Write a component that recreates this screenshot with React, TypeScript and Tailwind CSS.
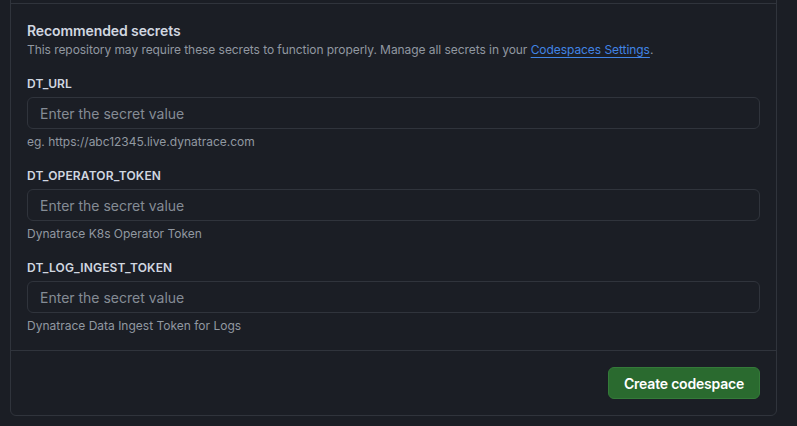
import React from "react";

const fields = [
  { name: "DT_URL", hint: "eg. https://abc12345.live.dynatrace.com" },
  { name: "DT_OPERATOR_TOKEN", hint: "Dynatrace K8s Operator Token" },
  { name: "DT_LOG_INGEST_TOKEN", hint: "Dynatrace Data Ingest Token for Logs" },
];

export default function App() {
  return (
    <div
      className="w-[797px] h-[426px] bg-[#1b1e25] overflow-hidden"
      style={{ fontFamily: "Inter, 'Noto Sans', sans-serif" }}
    >
      <div className="ml-[10px] w-[767px] -mt-[11px] border border-[#30343c] rounded-b-[6px]">
        <div className="h-[13px]" />
        <div className="border-t border-[#30343c] px-4 pt-[17px] pb-[15px]">
          <h2 className="text-[14px] leading-[20px] font-semibold text-[#d1d7e0] tracking-[-0.1px]">
            Recommended secrets
          </h2>
          <p className="text-[12px] leading-[18px] text-[#9198a1] tracking-[-0.06px]">
            This repository may require these secrets to function properly. Manage all secrets in your{" "}
            <a className="text-[#4184e4] underline underline-offset-[3px] decoration-1">Codespaces Settings</a>.
          </p>
          <div className="mt-4 flex flex-col gap-4">
            {fields.map((f) => (
              <div key={f.name} className="flex flex-col">
                <label className="text-[12px] leading-[18px] font-semibold text-[#d1d7e0] tracking-[0.15px]">{f.name}</label>
                <input
                  className="mt-1 h-[32px] w-full rounded-[6px] border border-[#30343c] bg-[#1b1e25] px-3 text-[14px] text-[#d1d7e0] placeholder:text-[#858c95] outline-none"
                  placeholder="Enter the secret value"
                />
                <span className="mt-1 text-[12px] leading-[18px] text-[#9198a1]">{f.hint}</span>
              </div>
            ))}
          </div>
        </div>
        <div className="border-t border-[#30343c] px-4 py-4 flex justify-end">
          <button className="h-[32px] w-[152px] rounded-[6px] bg-[#2a6a2f] border border-[#347a39] text-white text-[14px] font-semibold tracking-[-0.2px]">
            Create codespace
          </button>
        </div>
      </div>
    </div>
  );
}
